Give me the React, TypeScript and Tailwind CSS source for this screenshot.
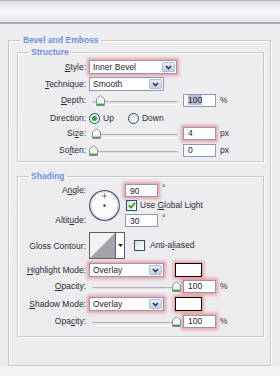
import React from 'react';

const glow = 'shadow-[0_0_3px_2px_rgba(238,112,112,0.6)]';

const Label = ({ children }: { children: React.ReactNode }) => (
    <div className="w-[68px] shrink-0 text-right leading-[14px]">{children}</div>
);

const Chevron = () => (
    <svg width="7" height="5" viewBox="0 0 7 5">
        <path d="M1 1 L3.5 3.6 L6 1" fill="none" stroke="#2b3654" strokeWidth="1.5" />
    </svg>
);

interface DropdownProps {
    value: string;
    width: string;
    lit?: boolean;
}

const Dropdown: React.FC<DropdownProps> = ({ value, width, lit = false }) => (
    <div
        className={`${width} ml-[3px] h-[14px] shrink-0 bg-white border border-[#8a9ab8] flex items-center justify-between pl-[3px] pr-[1px] text-[#1e1e1e] ${lit ? glow : ''}`}
    >
        <span className="leading-[12px]">{value}</span>
        <span className="w-[13px] h-[10px] rounded-[1px] border border-[#b3bfd6] bg-gradient-to-b from-[#e8ecf6] to-[#c3cce0] flex items-center justify-center">
            <Chevron />
        </span>
    </div>
);

const Input = ({ value, lit = false, selected = false }: { value: string; lit?: boolean; selected?: boolean }) => (
    <div
        className={`w-[33px] h-[13px] shrink-0 bg-white border border-[#8a9ab8] pl-[4px] flex items-center text-[#1e1e1e] ${lit ? glow : ''}`}
    >
        <span className={`leading-[10px] ${selected ? 'bg-[#b7bfd6]' : ''}`}>{value}</span>
    </div>
);

// thumb offset is the value's position along the track
const Slider = ({ pos }: { pos: number }) => (
    <div className="relative w-[90px] h-[14px] ml-[3px] shrink-0">
        <div className="absolute left-[3px] right-[1px] top-[8px] h-[3px] rounded-full bg-[#e6e6ea] border-t border-[#b0b0b8] shadow-[0_1px_0_#ffffff]" />
        <svg className="absolute top-[2px]" style={{ left: pos }} width="9" height="11" viewBox="0 0 9 11">
            <path d="M0.5 4 L4.5 0.5 L8.5 4 L8.5 10.5 L0.5 10.5 Z" fill="#f6f6f4" stroke="#8d8d94" />
            <rect x="1" y="8.6" width="7" height="1.6" fill="#3aa83a" />
        </svg>
    </div>
);

const Radio = ({ on = false }: { on?: boolean }) => (
    <span className="w-[11px] h-[11px] rounded-full border border-[#2a4a78] bg-gradient-to-br from-[#e2e2de] to-white flex items-center justify-center shrink-0">
        {on && <span className="w-[5px] h-[5px] rounded-full bg-[#24a63a]" />}
    </span>
);

const Checkbox = ({ on = false }: { on?: boolean }) => (
    <span className="w-[11px] h-[11px] border border-[#2a4a78] bg-gradient-to-br from-[#dcdcd8] to-white flex items-center justify-center shrink-0">
        {on && (
            <svg width="8" height="7" viewBox="0 0 8 7">
                <path d="M1 3.5 L3 5.5 L7 1" fill="none" stroke="#21a121" strokeWidth="1.8" />
            </svg>
        )}
    </span>
);

const Swatch = () => (
    <div className={`w-[27px] h-[14px] ml-[11px] shrink-0 bg-white border border-black ${glow}`} />
);

export default function App() {
    return (
        <div className="w-[280px] h-[376px] flex flex-col bg-[#ececef] font-['Liberation_Sans',Arial,sans-serif] text-[8.5px] text-[#2a2a36] overflow-hidden">
            <div className="h-[22px] shrink-0 border-t border-[#b4b4c0] bg-gradient-to-b from-[#dedee5] via-[#f8f8fa] to-[#e3e3e8]" />
            <div className="h-[2px] shrink-0 bg-[#a9a9b6]" />

            <div className="flex-1 bg-gradient-to-b from-[#eeeef1] to-[#ececef] pl-[8px] pt-[10px]">
                <fieldset className="w-[263px] border border-[#c6c6ce] shadow-[inset_1px_1px_0_#ffffff,1px_1px_0_#ffffff] pb-[28px]">
                    <legend className="ml-[12px] px-[2px] leading-[12px] font-bold text-[#6b8de4]">Bevel and Emboss</legend>

                    <fieldset className="ml-[8px] w-[247px] border border-[#c6c6ce] shadow-[inset_1px_1px_0_#ffffff,1px_1px_0_#ffffff] pt-[2px] pb-[4px]">
                        <legend className="ml-[11px] px-[2px] leading-[12px] font-bold text-[#6b8de4]">Structure</legend>

                        <div className="flex items-center h-[14px]">
                            <Label><u>S</u>tyle:</Label>
                            <Dropdown value="Inner Bevel" width="w-[88px]" lit />
                        </div>
                        <div className="flex items-center h-[14px] mt-[3px]">
                            <Label><u>T</u>echnique:</Label>
                            <Dropdown value="Smooth" width="w-[75px]" />
                        </div>
                        <div className="flex items-center h-[14px] mt-[2px]">
                            <Label><u>D</u>epth:</Label>
                            <Slider pos={7} />
                            <div className="ml-[4px]"><Input value="100" selected /></div>
                            <span className="ml-[4px]">%</span>
                        </div>
                        <div className="flex items-center h-[14px] mt-[4px]">
                            <Label>Direction:</Label>
                            <div className="ml-[3px] flex items-center">
                                <Radio on />
                                <span className="ml-[3px]">Up</span>
                                <span className="ml-[14px]"><Radio /></span>
                                <span className="ml-[3px]">Down</span>
                            </div>
                        </div>
                        <div className="flex items-center h-[14px] mt-[1px]">
                            <Label>Si<u>z</u>e:</Label>
                            <Slider pos={3} />
                            <div className="ml-[4px]"><Input value="4" lit /></div>
                            <span className="ml-[4px]">px</span>
                        </div>
                        <div className="flex items-center h-[14px] mt-[3px]">
                            <Label>So<u>f</u>ten:</Label>
                            <Slider pos={0} />
                            <div className="ml-[4px]"><Input value="0" /></div>
                            <span className="ml-[4px]">px</span>
                        </div>
                    </fieldset>

                    <fieldset className="ml-[8px] mt-[8px] w-[247px] border border-[#c6c6ce] shadow-[inset_1px_1px_0_#ffffff,1px_1px_0_#ffffff] pt-[2px] pb-[8px]">
                        <legend className="ml-[11px] px-[2px] leading-[12px] font-bold text-[#6b8de4]">Shading</legend>

                        <div className="flex">
                            <div className="w-[68px] h-[43px] shrink-0 flex flex-col justify-between text-right">
                                <div className="leading-[13px]">A<u>n</u>gle:</div>
                                <div className="leading-[13px]">Altit<u>u</u>de:</div>
                            </div>
                            <div className="ml-[3px] h-[43px] flex items-center">
                                <svg width="31" height="31" viewBox="0 0 31 31">
                                    <circle cx="15.5" cy="15.5" r="14.8" fill="#fbfbfb" stroke="#4e5a76" strokeWidth="1.3" />
                                    <circle cx="15.5" cy="15.5" r="13.5" fill="none" stroke="#dcdce2" strokeWidth="1" />
                                    <rect x="14.5" y="14.5" width="2" height="2" fill="#111" />
                                    <path d="M15.5 3.5 V8.5 M13 6 H18" stroke="#333" strokeWidth="0.9" strokeDasharray="1 0.6" />
                                </svg>
                            </div>
                            <div className="ml-[5px] flex flex-col">
                                <div className="flex items-start h-[13px]">
                                    <Input value="90" lit />
                                    <span className="ml-[4px] leading-[8px]">°</span>
                                </div>
                                <div className="flex items-center h-[11px] mt-[3px] ml-[1px]">
                                    <Checkbox on />
                                    <span className="ml-[3px]">Use <u>G</u>lobal Light</span>
                                </div>
                                <div className="flex items-start h-[13px] mt-[3px]">
                                    <Input value="30" />
                                    <span className="ml-[4px] leading-[8px]">°</span>
                                </div>
                            </div>
                        </div>

                        <div className="flex items-center h-[27px] mt-[5px]">
                            <Label>Gloss Contour:</Label>
                            <div className="ml-[3px] flex h-[27px] border border-[#5c5c66] bg-white">
                                <svg width="25" height="25" viewBox="0 0 25 25">
                                    <rect width="25" height="25" fill="#f2f2f2" />
                                    <path d="M0 25 L25 0 L25 25 Z" fill="#a4a4a8" />
                                </svg>
                                <div className="w-[9px] border-l border-[#5c5c66] flex items-center justify-center">
                                    <svg width="5" height="3" viewBox="0 0 5 3">
                                        <path d="M0 0 H5 L2.5 3 Z" fill="#222" />
                                    </svg>
                                </div>
                            </div>
                            <span className="ml-[9px]"><Checkbox /></span>
                            <span className="ml-[5px]">Anti-a<u>l</u>iased</span>
                        </div>

                        <div className="flex items-center h-[14px] mt-[4px]">
                            <Label><u>H</u>ighlight Mode:</Label>
                            <Dropdown value="Overlay" width="w-[75px]" lit />
                            <Swatch />
                        </div>
                        <div className="flex items-center h-[14px] mt-[2px]">
                            <Label><u>O</u>pacity:</Label>
                            <Slider pos={83} />
                            <div className="ml-[4px]"><Input value="100" lit /></div>
                            <span className="ml-[4px]">%</span>
                        </div>
                        <div className="flex items-center h-[14px] mt-[4px]">
                            <Label><u>S</u>hadow Mode:</Label>
                            <Dropdown value="Overlay" width="w-[75px]" lit />
                            <Swatch />
                        </div>
                        <div className="flex items-center h-[14px] mt-[3px]">
                            <Label>Opa<u>c</u>ity:</Label>
                            <Slider pos={83} />
                            <div className="ml-[4px]"><Input value="100" lit /></div>
                            <span className="ml-[4px]">%</span>
                        </div>
                    </fieldset>
                </fieldset>
            </div>

            <div className="h-[10px] shrink-0 bg-[#f4f4f6]" />
            <div className="h-[1px] shrink-0 bg-[#a6a6b2]" />
            <div className="h-[3px] shrink-0 bg-[#d2d2da]" />
        </div>
    );
}
